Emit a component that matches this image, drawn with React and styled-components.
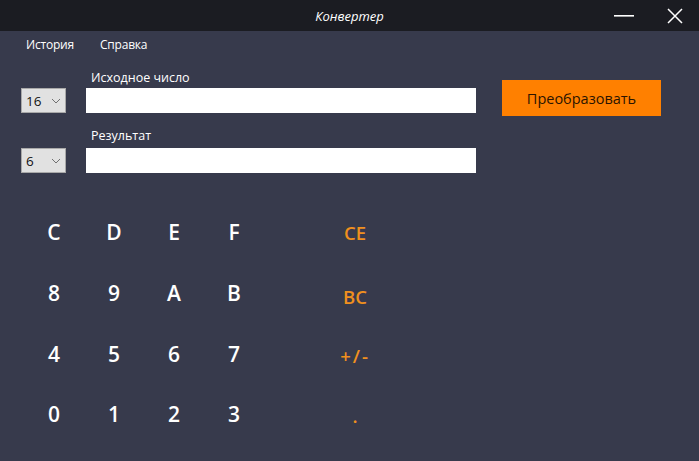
import React from "react";
import styled, { createGlobalStyle } from "styled-components";

const Global = createGlobalStyle`
  html, body { margin: 0; padding: 0; background: #373a4c; }
  body { font-family: "Open Sans", "Noto Sans", sans-serif; }
  * { box-sizing: border-box; }
`;

const Window = styled.div`
  width: 699px;
  height: 461px;
  background: #373a4c;
  display: flex;
  flex-direction: column;
  overflow: hidden;
`;

const TitleBar = styled.div`
  height: 31px;
  background: #1b1c22;
  display: grid;
  grid-template-columns: 1fr auto 1fr;
  align-items: center;
`;

const Title = styled.div`
  color: #ffffff;
  font-style: italic;
  font-size: 13px;
  font-family: "Open Sans", sans-serif;
  padding-top: 1px;
`;

const Controls = styled.div`
  justify-self: end;
  display: flex;
  align-items: center;
  gap: 33px;
  padding-right: 16px;
`;

const MenuBar = styled.div`
  height: 27px;
  display: flex;
  align-items: center;
  gap: 26px;
  padding-left: 26px;
`;

const MenuItem = styled.span`
  color: #ffffff;
  font-size: 12px;
  letter-spacing: -0.2px;
`;

const Form = styled.div`
  display: grid;
  grid-template-columns: 45px 390px 159px;
  grid-template-rows: 20px 25px 35px 25px;
  column-gap: 20px;
  padding-left: 21px;
  margin-top: 10px;
`;

const Label = styled.div`
  grid-column: 2;
  color: #ffffff;
  font-size: 12.5px;
  padding-left: 5px;
  padding-top: ${p => p.$top || 0}px;
  line-height: 20px;
`;

const Combo = styled.div`
  grid-column: 1;
  height: 25px;
  background: #e1e1e1;
  border: 1px solid #a9a9a9;
  display: flex;
  align-items: center;
  justify-content: space-between;
  padding: 1px 4px 0 4px;
  font-size: 13.5px;
  color: #111;
`;

const Input = styled.div`
  grid-column: 2;
  height: 25px;
  background: #ffffff;
`;

const ButtonCell = styled.div`
  grid-column: 3;
  grid-row: 1 / span 2;
  padding-top: 12px;
  margin-left: 6px;
`;

const ConvertButton = styled.div`
  width: 159px;
  height: 36px;
  background: #ff8000;
  color: #2b1400;
  font-size: 14.5px;
  display: flex;
  align-items: center;
  justify-content: center;
`;

const Keypad = styled.div`
  display: grid;
  grid-template-columns: repeat(4, 60px) 61px 60px;
  grid-auto-rows: 60.7px;
  padding-left: 24px;
  margin-top: 29px;
`;

const Key = styled.div`
  grid-column: ${p => p.$col};
  display: flex;
  align-items: center;
  justify-content: center;
  color: #ffffff;
  font-size: 21px;
  font-weight: 600;
`;

const OpKey = styled.div`
  grid-column: 6;
  display: flex;
  align-items: center;
  justify-content: center;
  color: #f0901e;
  font-size: 18.5px;
  font-weight: 600;
  letter-spacing: ${p => p.$spacing || 0}px;
  padding-top: ${p => p.$shift || 0}px;
`;

const Chevron = () => (
  <svg width="10" height="6" viewBox="0 0 10 6">
    <path d="M1 1 L5 5 L9 1" stroke="#707070" strokeWidth="1" fill="none" />
  </svg>
);

const rows = [
  ["C", "D", "E", "F"],
  ["8", "9", "A", "B"],
  ["4", "5", "6", "7"],
  ["0", "1", "2", "3"],
];
const ops = [
  { t: "CE", s: 1, sp: 0 },
  { t: "BC", s: 7, sp: 0 },
  { t: "+/-", s: 4, sp: 2 },
  { t: ".", s: 3, sp: 0 },
];

export default function App() {
  return (
    <Window>
      <Global />
      <TitleBar>
        <div />
        <Title>Конвертер</Title>
        <Controls>
          <svg width="20" height="2" viewBox="0 0 20 2">
            <rect x="0" y="0" width="20" height="1.6" fill="#fff" />
          </svg>
          <svg width="16" height="16" viewBox="0 0 16 16">
            <path d="M1 1 L15 15 M15 1 L1 15" stroke="#fff" strokeWidth="1.5" />
          </svg>
        </Controls>
      </TitleBar>
      <MenuBar>
        <MenuItem>История</MenuItem>
        <MenuItem>Справка</MenuItem>
      </MenuBar>
      <Form>
        <Label>Исходное число</Label>
        <ButtonCell>
          <ConvertButton>Преобразовать</ConvertButton>
        </ButtonCell>
        <Combo><span>16</span><Chevron /></Combo>
        <Input />
        <Label $top={13}>Результат</Label>
        <Combo><span>6</span><Chevron /></Combo>
        <Input />
      </Form>
      <Keypad>
        {rows.map((r, i) => (
          <React.Fragment key={i}>
            {r.map((k, j) => (
              <Key key={k} $col={j + 1}>{k}</Key>
            ))}
            <OpKey $shift={ops[i].s} $spacing={ops[i].sp}>{ops[i].t}</OpKey>
          </React.Fragment>
        ))}
      </Keypad>
    </Window>
  );
}
